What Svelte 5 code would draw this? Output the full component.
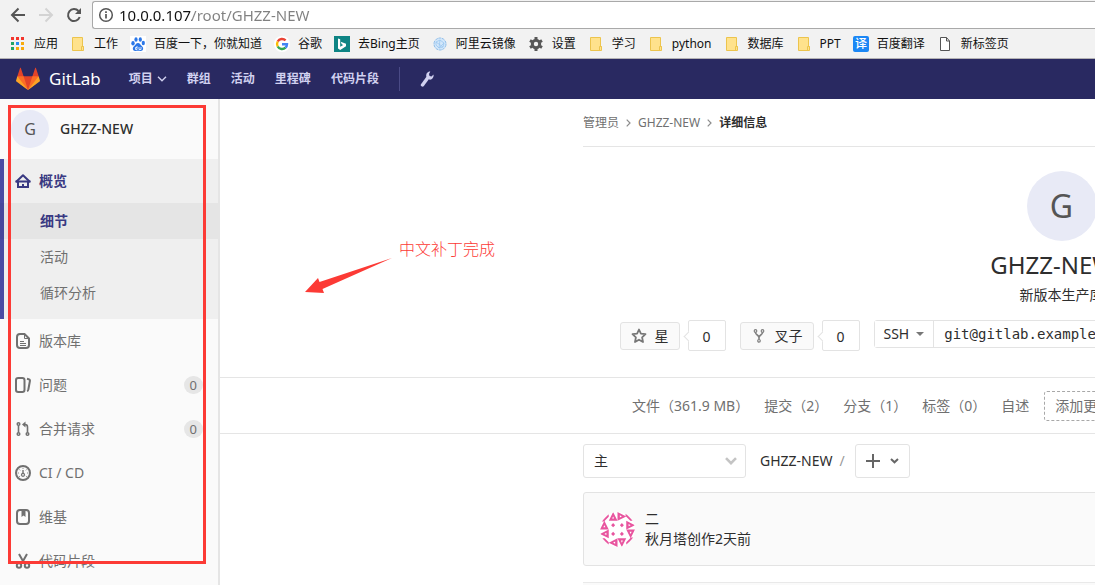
<script>
  const bookmarks = [
    { icon: 'apps', label: '应用' },
    { icon: 'folder', label: '工作' },
    { icon: 'paw', label: '百度一下，你就知道' },
    { icon: 'google', label: '谷歌' },
    { icon: 'bing', label: '去Bing主页' },
    { icon: 'cloud', label: '阿里云镜像' },
    { icon: 'gear', label: '设置' },
    { icon: 'folder', label: '学习' },
    { icon: 'folder', label: 'python' },
    { icon: 'folder', label: '数据库' },
    { icon: 'folder', label: 'PPT' },
    { icon: 'translate', label: '百度翻译' },
    { icon: 'page', label: '新标签页' }
  ];
  const menus = ['群组', '活动', '里程碑', '代码片段'];
  const overview = ['细节', '活动', '循环分析'];
  const sections = [
    { icon: 'doc', label: '版本库' },
    { icon: 'issues', label: '问题', count: 0 },
    { icon: 'merge', label: '合并请求', count: 0 },
    { icon: 'gauge', label: 'CI / CD' },
    { icon: 'book', label: '维基' },
    { icon: 'scissors', label: '代码片段' }
  ];
  const stats = ['文件（361.9 MB）', '提交（2）', '分支（1）', '标签（0）', '自述'];
  const cells = [
    [13, 0, 0], [26, 0, 90], [39, 13, 90], [39, 26, 180],
    [26, 39, 180], [13, 39, 270], [0, 26, 270], [0, 13, 0]
  ];
  const dots = [[19.5, 19.5], [32.5, 19.5], [19.5, 32.5], [32.5, 32.5]];
  const squares = [
    [0, 0, '#f3352c'], [5, 0, '#f3352c'], [10, 0, '#f3352c'],
    [0, 5, '#23a566'], [5, 5, '#2a8df2'], [10, 5, '#f9ab0b'],
    [0, 10, '#23a566'], [5, 10, '#f9ab0b'], [10, 10, '#f9ab0b']
  ];
</script>

{#snippet markIcon(name)}
  <svg class="i16" viewBox="0 0 16 16" aria-hidden="true">
    {#if name === 'apps'}
      {#each squares as [x, y, fill]}
        <rect x={x + 1} y={y + 1} width="3" height="3" {fill} />
      {/each}
    {:else if name === 'folder'}
      <path d="M2.5 1.5h10v9h1v4h-11z" fill="#ffe28c" stroke="#ecc44d" />
      <path d="M11.5 14v-3.500h2" fill="none" stroke="#ecc44d" />
    {:else if name === 'paw'}
      <rect width="16" height="16" fill="#fff" />
      <g fill="#2b77e8">
        <ellipse cx="3" cy="7.300" rx="1.700" ry="2.200" />
        <ellipse cx="6" cy="3.500" rx="1.600" ry="2.200" />
        <ellipse cx="10.300" cy="3.500" rx="1.600" ry="2.200" />
        <ellipse cx="13.300" cy="7" rx="1.600" ry="2.200" />
        <path d="M8 7c2 0 2.500 2 4 3.300 2.200 2 1 5-1.500 4.700-1.800-.3-3.200-.3-5 0C3 15.300 1.800 12.300 4 10.300 5.500 9 6 7 8 7z" />
      </g>
      <path d="M7 10v3.500H5.500v-2H7M9 11v2.500h2V11" fill="none" stroke="#fff" stroke-width=".8" />
    {:else if name === 'google'}
      <circle cx="8" cy="8" r="8" fill="#fff" />
      <g fill="none" stroke-width="2.400">
        <path d="M11.600 4.400A5 5 0 0 0 3.700 5.500" stroke="#ea4335" />
        <path d="M3.700 5.500a5 5 0 0 0 0 5" stroke="#fbbc05" />
        <path d="M3.700 10.500a5 5 0 0 0 7.800 1.200" stroke="#34a853" />
        <path d="M11.500 11.700A5 5 0 0 0 13 8.200H8" stroke="#4285f4" />
      </g>
    {:else if name === 'bing'}
      <rect width="16" height="16" fill="#0e8484" />
      <path d="M4 2.500l2.200.8v7.400l3-1.700-1.500-.8-1-2.400 5.300 1.900v2.600L6.200 14 4 12.500z" fill="#fff" />
    {:else if name === 'cloud'}
      <circle cx="8" cy="8" r="6" fill="#d3e7fa" stroke="#8dbdea" stroke-dasharray="3 .7" />
      <path d="M4 6l4-2 4 3-1 4-4 1-3-3zM4 6l7 5M12 7l-5 5M8 4l-1 8" fill="none" stroke="#9cc8f0" stroke-width=".8" />
    {:else if name === 'gear'}
      <circle cx="8" cy="8" r="3.700" fill="none" stroke="#575757" stroke-width="3" />
      <g stroke="#575757" stroke-width="3">
        <path d="M8 1v2.500M8 12.500V15M2 4.500l2 1.200M12 10.300l2 1.200M2 11.500l2-1.200M12 5.700l2-1.200" />
      </g>
    {:else if name === 'translate'}
      <rect width="16" height="16" rx="2" fill="#1b87f5" />
      <text x="8" y="12" text-anchor="middle" font-size="12" font-weight="500" fill="#fff">译</text>
    {:else}
      <path d="M3.500 1.500h6l3 3.500v9.500h-9z" fill="#fff" stroke="#555" />
      <path d="M9.500 1.500V5h3" fill="none" stroke="#555" />
    {/if}
  </svg>
{/snippet}

{#snippet sideIcon(name)}
  <svg class="i16" viewBox="0 0 16 16" fill="none" stroke="currentColor" stroke-width="2" aria-hidden="true">
    {#if name === 'home'}
      <path d="M1.500 8.500L8 2.300l6.500 6.200" stroke-linecap="round" stroke-linejoin="round" />
      <path d="M.5 8.500h15M3 8.500V14h10V8.500" />
      <path d="M8 14v-3" stroke-width="2" />
    {:else if name === 'doc'}
      <path d="M5 1h4.500L14 5.500V12a3 3 0 0 1-3 3H5a3 3 0 0 1-3-3V4a3 3 0 0 1 3-3z" />
      <path d="M9.500 1v4.500H14M5 8.500h4M5 10.500h6M5 12.500h6" stroke-width="1" />
    {:else if name === 'issues'}
      <rect x="1" y="1" width="8.500" height="14" rx="2.200" />
      <path d="M12 1.800l1.700.4c.9.200 1.400.9 1.200 1.800l-1.500 8.300c-.2.900-.6 1.500-1.400 1.700" />
    {:else if name === 'merge'}
      <g stroke-width="1.500">
        <circle cx="3.500" cy="3" r="1.300" /><circle cx="3.500" cy="13" r="1.300" /><circle cx="12.500" cy="13" r="1.300" />
      </g>
      <path d="M3.500 4.500v7M12.500 11.500V6c0-1.700-.8-2.500-2.500-2.500" stroke-width="1.600" />
      <path d="M10.500.5v6L7 3.500z" fill="currentColor" stroke="none" />
    {:else if name === 'gauge'}
      <circle cx="8" cy="8" r="7" />
      <circle cx="8" cy="9.800" r="1.500" stroke-width="1.200" />
      <path d="M8 5v3.500" stroke-width="1.400" />
      <path d="M8 2.800v1M3.800 8h-1M13.200 8h-1M4.300 4.500l.8.8M11.700 4.500l-.8.8M4.300 11.700l.8-.8M11.700 11.700l-.8-.8" stroke-width="1" />
    {:else if name === 'book'}
      <rect x="2" y="1" width="12" height="14" rx="3" />
      <path d="M6.500 1h4v7l-2-1.500-2 1.500z" fill="currentColor" stroke="none" />
    {:else}
      <path d="M4 1l4.800 8.500M12 1L7.200 9.500" />
      <circle cx="4" cy="12.500" r="2.200" /><circle cx="12" cy="12.500" r="2.200" />
      <path d="M8 8.500v2M5.500 11L8 8.500 10.500 11" />
    {/if}
  </svg>
{/snippet}

<div class="window">
  <header class="browser">
    <div class="toolbar">
      <button class="tool" aria-label="后退">
        <svg class="i16" viewBox="0 0 16 16" fill="none" stroke="#555" stroke-width="2"><path d="M15 8H2.500M8.500 1.500L2 8l6.500 6.500" /></svg>
      </button>
      <button class="tool" aria-label="前进">
        <svg class="i16" viewBox="0 0 16 16" fill="none" stroke="#d3d3d3" stroke-width="2"><path d="M1 8h12.500M7.500 1.500L14 8l-6.500 6.500" /></svg>
      </button>
      <button class="tool" aria-label="刷新">
        <svg class="i16" viewBox="0 0 16 16" fill="none" stroke="#555" stroke-width="2"><path d="M13.700 10A6 6 0 1 1 12.500 4" /><path d="M15 1v6H9z" fill="#555" stroke="none" /></svg>
      </button>
      <label class="address">
        <svg class="i16" viewBox="0 0 16 16" fill="none" stroke="#555" aria-hidden="true"><circle cx="8" cy="8" r="6.300" stroke-width="1.500" /><path d="M8 7v4.500M8 4.300v1.700" stroke-width="1.700" /></svg>
        <input aria-label="地址" value="10.0.0.107/root/GHZZ-NEW" />
      </label>
    </div>
    <nav class="bookmarks">
      {#each bookmarks as mark}
        <a href="#mark">{@render markIcon(mark.icon)}<span>{mark.label}</span></a>
      {/each}
    </nav>
  </header>

  <nav class="topnav">
    <a class="brand" href="#home">
      <svg width="24" height="24" viewBox="0 0 36 36" aria-hidden="true">
        <path fill="#e24329" d="M2 14l9.380 9v-9l-4-12.280c-.205-.632-1.176-.632-1.380 0z" />
        <path fill="#e24329" d="M34 14l-9.380 9v-9l4-12.280c.205-.632 1.176-.632 1.380 0z" />
        <path fill="#e24329" d="M18 34.380L3 14h30z" />
        <path fill="#fc6d26" d="M18 34.380L11.380 14H2l4 11z" />
        <path fill="#fc6d26" d="M18 34.380L24.620 14H34l-4 11z" />
        <path fill="#fca326" d="M2 14L.1 20.160c-.18.565 0 1.200.5 1.560l17.420 12.660z" />
        <path fill="#fca326" d="M34 14l1.900 6.160c.18.565 0 1.200-.5 1.560L18 34.380z" />
      </svg>
      <span>GitLab</span>
    </a>
    <button class="projects">项目
      <svg width="10" height="6" viewBox="0 0 10 6" fill="none" stroke="currentColor" stroke-width="1.400" aria-hidden="true"><path d="M1 .8l4 4 4-4" /></svg>
    </button>
    {#each menus as menu}
      <a href="#menu">{menu}</a>
    {/each}
    <a class="admin" href="#admin" aria-label="管理区域">
      <svg class="i16" viewBox="0 0 16 16" fill="none" aria-hidden="true">
        <path d="M3.500 14L9 6.500" stroke="currentColor" stroke-width="3.400" stroke-linecap="round" />
        <path d="M11.300.6C8.500.4 6.800 3 7.300 5.500l2.900 3.100c2.500.7 4.900-1.900 4.300-5l-2 1.900-2-.5-.5-2z" fill="currentColor" />
      </svg>
    </a>
  </nav>

  <div class="page">
    <aside class="sidebar">
      <a class="project" href="#project"><span class="avatar">G</span><strong>GHZZ-NEW</strong></a>
      <div class="active">
        <a class="row" href="#overview">{@render sideIcon('home')}<span>概览</span></a>
        {#each overview as label, i}
          <a class="sub" class:current={i === 0} href="#sub">{label}</a>
        {/each}
      </div>
      {#each sections as item}
        <a class="row" href="#section">
          {@render sideIcon(item.icon)}<span>{item.label}</span>
          {#if item.count !== undefined}<span class="badge">{item.count}</span>{/if}
        </a>
      {/each}
    </aside>

    <main>
      <section class="hero">
        <div class="container">
          <nav class="crumbs">
            <a href="#owner">管理员</a>
            <svg width="5" height="8" viewBox="0 0 5 8" fill="none" stroke="#8c8c8c" stroke-width="1.200" aria-hidden="true"><path d="M.7.7L4 4 .7 7.300" /></svg>
            <a href="#project">GHZZ-NEW</a>
            <svg width="5" height="8" viewBox="0 0 5 8" fill="none" stroke="#8c8c8c" stroke-width="1.200" aria-hidden="true"><path d="M.7.7L4 4 .7 7.300" /></svg>
            <strong>详细信息</strong>
          </nav>
          <div class="identity">
            <span class="avatar big">G</span>
            <h1>GHZZ-NEW
              <svg width="14" height="16" viewBox="0 0 14 16" fill="none" stroke="#707070" stroke-width="2" aria-hidden="true"><path d="M4 7V5a3 3 0 0 1 6 0v2" /><rect x="2" y="7" width="10" height="7" rx="1" fill="#707070" /></svg>
            </h1>
            <p>新版本生产库</p>
          </div>
          <div class="actions">
            <button class="act">
              <svg class="i16" viewBox="0 0 16 16" fill="none" stroke="#777" stroke-width="1.800" stroke-linejoin="round" aria-hidden="true"><path d="M8 1.500l1.900 4.200 4.600.5-3.400 3.100.9 4.700L8 11.700 4 14l.9-4.700L1.500 6.200l4.600-.5z" /></svg>
              <span>星</span>
            </button>
            <span class="count">0</span>
            <button class="act">
              <svg class="i16" viewBox="0 0 16 16" fill="none" stroke="#808080" stroke-width="1.200" aria-hidden="true"><circle cx="4.500" cy="3" r="1.300" /><circle cx="11.500" cy="3" r="1.300" /><circle cx="8" cy="12.800" r="1.300" /><path d="M4.500 4.500C4.500 7 8 7 8 9.500c0-2.500 3.500-2.500 3.500-5M8 8.500v3" stroke-width="1.600" /></svg>
              <span>叉子</span>
            </button>
            <span class="count">0</span>
            <div class="clone">
              <button>SSH <svg width="8" height="4" viewBox="0 0 8 4" aria-hidden="true"><path d="M0 0h8L4 4z" fill="#777" /></svg></button>
              <input aria-label="项目克隆地址" readonly value="git@gitlab.example.com:root/GHZZ-NEW.git" />
            </div>
          </div>
        </div>
      </section>

      <section class="stats">
        <div class="container">
          {#each stats as stat}
            <a href="#stat">{stat}</a>
          {/each}
          <a class="dashed" href="#add">添加更新日志</a>
        </div>
      </section>

      <div class="container">
        <div class="tree">
          <div class="branch">
            <select aria-label="分支"><option>主</option></select>
            <svg width="12" height="8" viewBox="0 0 12 8" fill="none" stroke="#c4c4c4" stroke-width="2.600" aria-hidden="true"><path d="M1 1.200l5 5 5-5" /></svg>
          </div>
          <div class="path"><a href="#root">GHZZ-NEW</a><span>/</span></div>
          <button class="plus" aria-label="添加">
            <svg width="14" height="14" viewBox="0 0 14 14" stroke="#666" stroke-width="2" aria-hidden="true"><path d="M7 0v14M0 7h14" /></svg>
            <svg width="9" height="6" viewBox="0 0 9 6" fill="none" stroke="#666" stroke-width="2" aria-hidden="true"><path d="M1 1l3.500 3.300L8 1" /></svg>
          </button>
        </div>
        <div class="commit">
          <svg width="35" height="35" viewBox="0 0 52 52" aria-hidden="true">
            <defs><clipPath id="round"><circle cx="26" cy="26" r="26" /></clipPath></defs>
            <g clip-path="url(#round)">
              <rect width="52" height="52" fill="#fff" />
              <g fill="#e8559f">
                {#each cells as [x, y, turn]}
                  <path fill-rule="evenodd" transform="translate({x} {y}) rotate({turn} 6.500 6.500)" d="M0 13L6.500 0 13 13zM5 9.500h3L6.500 6.500z" />
                {/each}
                {#each dots as [x, y]}
                  <path d="M{x - 3} {y}l3-3 3 3-3 3z" />
                {/each}
                <path d="M2 14L13 3v4L6 14zM38 2l11 11h-4l-7-7zM50 38L39 49v-4l7-7zM3 39l10 10v-4l-6-6z" />
              </g>
            </g>
          </svg>
          <div><a href="#commit">二</a><p>秋月塔创作2天前</p></div>
        </div>
        <div class="files"></div>
      </div>
    </main>
  </div>

  <div class="frame"></div>
  <div class="note">
    <svg width="88" height="36" viewBox="0 0 88 36" aria-hidden="true"><path d="M87 0L14.500 24 13 20 0 34l19 1-1.500-4z" fill="#fc3a35" /></svg>
    <span>中文补丁完成</span>
  </div>
</div>

<style>
  :global(body) { margin: 0; }
  .window {
    position: relative;
    height: 100vh;
    overflow: hidden;
    background: #fff;
    color: #2e2e2e;
    font-family: "Noto Sans", "Noto Sans CJK SC", sans-serif;
    font-size: 14px;
    line-height: 20px;
  }
  a { color: inherit; text-decoration: none; white-space: nowrap; }
  button, input, select { margin: 0; font: inherit; color: inherit; }
  button { display: flex; align-items: center; cursor: pointer; white-space: nowrap; }
  svg { display: block; flex: none; }
  .i16 { width: 16px; height: 16px; }

  .browser { background: #f2f2f2; border-bottom: 1px solid #b4b2b4; }
  .toolbar { display: flex; align-items: center; gap: 12px; padding: 1px 0 0 10px; }
  .tool { padding: 0; border: 0; background: none; }
  .address {
    flex: 1;
    display: flex;
    align-items: center;
    gap: 5px;
    height: 26px;
    margin-left: -2px;
    padding-left: 5px;
    border: 1px solid #a9a9a9;
    border-right: 0;
    border-radius: 3px 0 0 3px;
    background: #fff;
  }
  .address input {
    flex: 1;
    padding: 0;
    border: 0;
    outline: 0;
    background: linear-gradient(to right, #111 73px, #808080 73px);
    background-clip: text;
    color: transparent;
    font-size: 15px;
    line-height: 24px;
  }
  .bookmarks { display: flex; gap: 12px; padding: 1px 10px 0; height: 28px; align-items: center; color: #111; font-size: 12px; }
  .bookmarks a { display: flex; align-items: center; gap: 8px; }

  .topnav { display: flex; align-items: center; gap: 20px; height: 40px; padding-left: 16px; background: #292961; color: #d1d1f0; font-size: 12px; font-weight: 700; }
  .brand { display: flex; align-items: center; gap: 9px; margin-right: 8px; color: #fff; font-size: 17px; font-weight: 400; }
  .projects { gap: 4px; padding: 0; border: 0; background: none; }
  .admin { display: flex; align-items: center; height: 24px; padding-left: 19px; border-left: 1px solid #4a4a86; }

  .page { display: flex; }
  .sidebar { flex: 0 0 218px; background: #fafafa; border-right: 2px solid #e5e5e5; color: #707070; min-height: calc(100vh - 99px); }
  .project { display: flex; align-items: center; gap: 11px; height: 60px; padding-left: 11px; color: #2e2e2e; }
  .project strong { font-weight: 500; }
  .avatar { display: grid; place-items: center; width: 38px; height: 38px; border-radius: 50%; background: #e8eaf6; color: #555; font-size: 16px; }
  .active { padding-bottom: 8px; background: #efefef; box-shadow: inset 4px 0 #4b4ba3; }
  .row { display: flex; align-items: center; gap: 8px; height: 44px; padding: 0 15px; }
  .active .row, .current { color: #393982; font-weight: 600; }
  .sub { display: block; padding: 8px 0 8px 40px; }
  .current { background: rgba(0, 0, 0, 0.04); }
  .badge { margin-left: auto; padding: 0 6px; border-radius: 9px; background: #e6e6e6; font-size: 13px; line-height: 18px; }

  main { flex: 0 0 1683px; }
  .container { width: 957px; margin: 0 auto; }
  .hero, .stats { border-bottom: 1px solid #e5e5e5; }
  .crumbs { display: flex; align-items: center; gap: 7px; height: 46px; padding-top: 1px; border-bottom: 1px solid #e5e5e5; color: #707070; font-size: 12px; }
  .crumbs strong { color: #2e2e2e; font-weight: 700; }
  .identity { display: flex; flex-direction: column; align-items: center; padding-top: 24px; }
  .big { width: 70px; height: 70px; font-size: 32px; }
  h1 { display: flex; align-items: center; gap: 4px; margin: 8px 0 4px; font-size: 24px; font-weight: 400; line-height: 32px; }
  p { margin: 0; }
  .actions { display: flex; align-items: center; width: 884px; margin: 0 auto; padding: 15px 0 26px; }
  .act { gap: 8px; height: 28px; padding: 0 10px; border: 1px solid #e3e3e3; border-radius: 3px; background: #fafafa; }
  .count { position: relative; width: 36px; margin: 0 14px 0 8px; border: 1px solid #e3e3e3; border-radius: 2px; line-height: 27px; padding-top: 2px; text-align: center; }
  .count::before {
    content: "";
    position: absolute;
    left: -4px;
    top: 12px;
    width: 6px;
    height: 6px;
    border: solid #e3e3e3;
    border-width: 0 0 1px 1px;
    background: #fff;
    transform: rotate(45deg);
  }
  .clone { flex: 1; box-sizing: border-box; display: flex; height: 28px; margin-bottom: 3px; border: 1px solid #e3e3e3; border-radius: 3px; }
  .clone button { gap: 7px; padding: 0 9px; border: 0; border-right: 1px solid #e3e3e3; background: #fff; }
  .clone input { flex: 1; min-width: 0; padding: 0 10px; border: 0; background: #fff; font-family: "DejaVu Sans Mono", monospace; }

  .stats .container { display: flex; align-items: center; gap: 15px; height: 55px; color: #707070; }
  .stats a:first-child { margin-left: 49px; }
  .dashed { padding: 4px 10px; border: 1px dashed #a8a8a8; border-radius: 3px; }

  .tree { display: flex; align-items: center; padding: 10px 0 14px; }
  .branch { display: grid; align-items: center; width: 163px; }
  .branch select, .branch svg { grid-area: 1 / 1; }
  .branch select { appearance: none; width: 100%; height: 34px; padding: 0 10px; border: 1px solid #e3e3e3; border-radius: 3px; background: #fff; }
  .branch svg { justify-self: end; margin-right: 9px; pointer-events: none; }
  .path { display: flex; gap: 7px; margin: 0 10px 0 14px; }
  .path span { color: #999; }
  .plus { gap: 10px; height: 34px; padding: 0 10px; border: 1px solid #e3e3e3; border-radius: 3px; background: #fff; }
  .commit { display: flex; align-items: center; gap: 10px; height: 72px; padding-left: 16px; border: 1px solid #e3e3e3; border-radius: 3px; background: #fafafa; }
  .files { height: 40px; margin-top: 16px; border-top: 1px solid #e9e9e9; background: #fafafa; }

  .frame { position: absolute; left: 8px; top: 105px; width: 192px; height: 453px; border: 3px solid #fc3a35; pointer-events: none; }
  .note { position: absolute; left: 305px; top: 239px; display: flex; gap: 6px; color: #fc3a35; font-size: 16px; font-weight: 300; white-space: nowrap; }
  .note svg { margin-top: 19px; }
</style>
